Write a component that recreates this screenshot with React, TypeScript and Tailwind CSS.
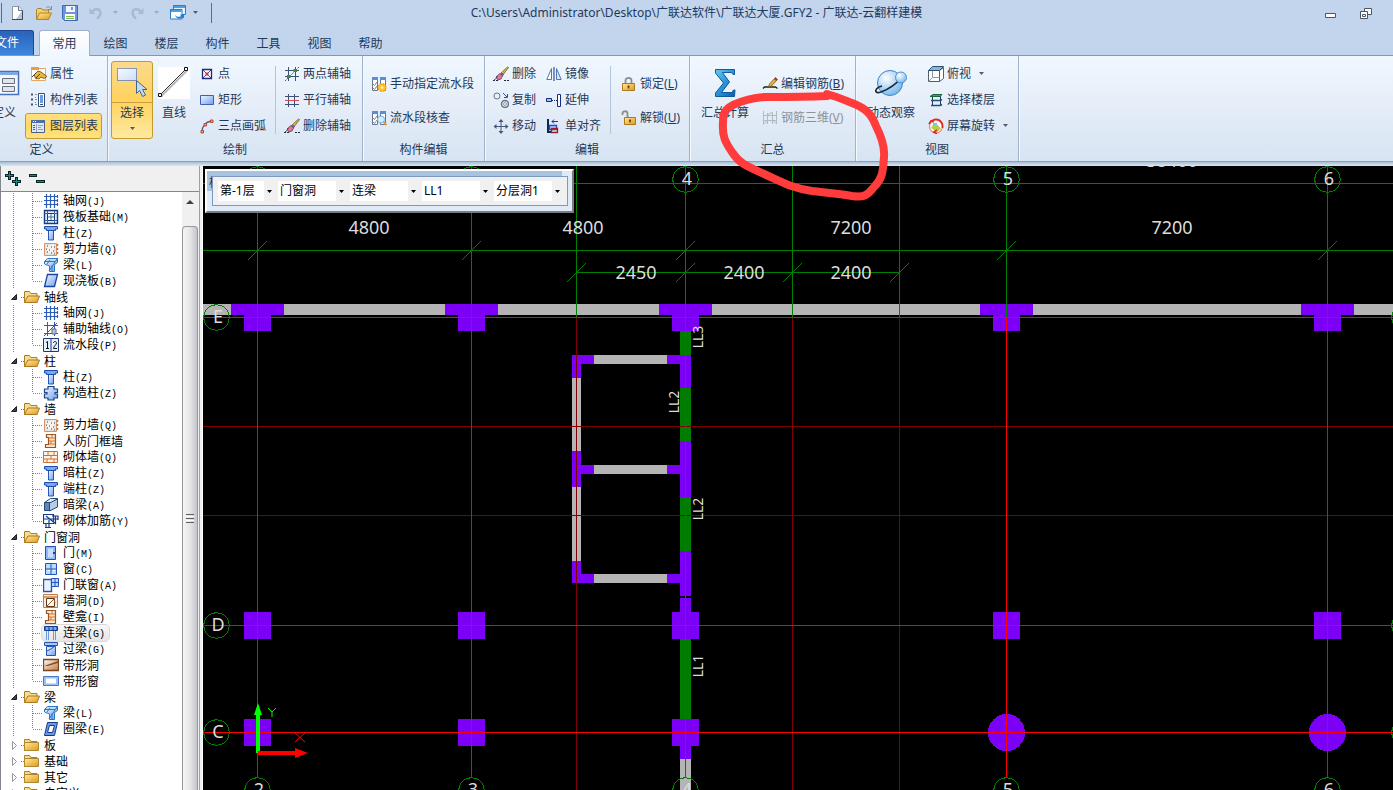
import { useState, type ReactNode } from 'react'
import { clsx } from 'clsx'

type IconProps = { size?: number; children: ReactNode; box?: number }

function Glyph({ size = 16, box = 16, children }: IconProps) {
  return (
    <svg width={size} height={size} viewBox={`0 0 ${box} ${box}`} fill="none" className="shrink-0" aria-hidden="true">
      {children}
    </svg>
  )
}

function Defs() {
  return (
    <svg width="0" height="0" className="absolute" aria-hidden="true">
      <defs>
        <linearGradient id="gBlue" x1="0" y1="0" x2="1" y2="1">
          <stop offset="0" stopColor="#f4f9ff" />
          <stop offset="1" stopColor="#6f9df0" />
        </linearGradient>
        <linearGradient id="gGold" x1="0" y1="0" x2="1" y2="1">
          <stop offset="0" stopColor="#ffeb9c" />
          <stop offset="1" stopColor="#e0981c" />
        </linearGradient>
        <linearGradient id="gSigma" x1="0" y1="0" x2="1" y2="1">
          <stop offset="0" stopColor="#6cc8f0" />
          <stop offset="0.5" stopColor="#2a93d8" />
          <stop offset="1" stopColor="#0c5ca8" />
        </linearGradient>
        <linearGradient id="gBrown" x1="0" y1="0" x2="1" y2="1">
          <stop offset="0" stopColor="#ffffff" />
          <stop offset="1" stopColor="#c07840" />
        </linearGradient>
        <radialGradient id="gGlobe" cx="0.35" cy="0.3" r="0.8">
          <stop offset="0" stopColor="#ffffff" />
          <stop offset="1" stopColor="#6ab2ec" />
        </radialGradient>
      </defs>
    </svg>
  )
}

const Caret = ({ light = false }: { light?: boolean }) => (
  <svg width="7" height="4" viewBox="0 0 7 4" className="shrink-0" aria-hidden="true">
    <path d="M1 0h5L3.500 3z" fill={light ? '#9fabbd' : '#4d5d73'} />
  </svg>
)

/* quick access icons */
const NewIcon = () => (
  <Glyph>
    <path d="M2.500 1.500h6.500l3.500 4v9h-10z" fill="#fff" stroke="#8b98aa" />
    <path d="M6 14l6-8v8z" fill="#b9c6d8" />
    <path d="M12.500 5v9.500H2" stroke="#3d4756" />
    <path d="M8.500 1.500v4h4" fill="#e8eef6" stroke="#66748a" />
  </Glyph>
)
const OpenIcon = () => (
  <Glyph>
    <path d="M.5 14V4.500l1-1h4l1.500 1.500h5.500V8" fill="#f2cf6c" stroke="#a8842c" />
    <path d="M.5 14.500L3.500 8H15.500l-3 6.500z" fill="url(#gGold)" stroke="#b5832a" />
    <path d="M10 3c1.500-2 3.500-1.500 4.500.5M15.500 1v3.500H12" stroke="#7a8da8" />
  </Glyph>
)
const SaveIcon = () => (
  <Glyph>
    <path d="M.5.5h15v15h-13l-2-2z" fill="#6f95dc" stroke="#3f67b8" />
    <path d="M4 1h9v6H4z" fill="#f2f6fc" />
    <path d="M9 2h2v3H9z" fill="#6f95dc" />
    <path d="M3 9h10v6H3z" fill="#fff" />
    <path d="M4 11.500h8M4 13.500h8" stroke="#7fbf4c" />
  </Glyph>
)
const UndoIcon = () => (
  <Glyph>
    <path d="M4 7c2-3.500 8-4 8.500.5.200 3-1.500 4.500-3.500 6" stroke="#a9b9d0" strokeWidth="2.400" />
    <path d="M1.500 3v6h6z" fill="#a9b9d0" />
  </Glyph>
)
const RedoIcon = () => (
  <Glyph>
    <path d="M12 7c-2-3.500-8-4-8.500.5-.2 3 1.500 4.500 3.500 6" stroke="#a9b9d0" strokeWidth="2.400" />
    <path d="M14.500 3v6h-6z" fill="#a9b9d0" />
  </Glyph>
)
const WindowsIcon = () => (
  <Glyph>
    <path d="M3.500.5h12v9h-12z" fill="#e6f3fd" stroke="#2b7ec4" />
    <path d="M4 1h11v2H4z" fill="#4aa3e0" />
    <path d="M.5 4.500h11.500v9.500H.5z" fill="#fff" stroke="#2b7ec4" />
    <path d="M1 5h10.500v2H1z" fill="#4aa3e0" />
    <path d="M5 9.500c1 2.500 4 3 6 1.500l-1-1.500h4v4l-1.300-1.300C9.500 15 5.500 13.500 5 9.500z" fill="#1f7fd0" />
  </Glyph>
)

/* ribbon icons */
const DefineIcon = () => (
  <Glyph size={32} box={32}>
    <path d="M3 4.500h27.500v23H3z" fill="#f4f8fd" stroke="#4472b8" strokeWidth="1.500" />
    <path d="M3.500 5h26.500v3H3.500z" fill="#7fa9e4" />
    <path d="M14.500 11.500h12v5h-12zM14.500 19.500h12v5h-12z" fill="#dfe6ee" stroke="#66707e" />
  </Glyph>
)
const PropIcon = () => (
  <Glyph>
    <path d="M.5 2.500h14v12H.5z" fill="#fff" stroke="#e8a860" />
    <path d="M0 1h8v3H0z" fill="#ef9a48" />
    <path d="M3 9l4-4 3 1 6 4.500-3 2-3-1.500-2 2-2-.5-1 .5z" fill="#edb838" stroke="#5a4420" strokeWidth=".8" />
    <path d="M1 11l4-4M5 12l4-4" stroke="#4a3820" />
  </Glyph>
)
const ListIcon = () => (
  <Glyph>
    <path d="M0 2.500h2M0 7.500h2M0 12.500h2" stroke="#44546c" strokeWidth="2" />
    <path d="M4 2.500h2M4 5.500h1M4 7.500h2M4 10.500h1M4 12.500h2" stroke="#8090a8" />
    <path d="M7.500 1.500h6v13h-6z" fill="#fff" stroke="#34506e" />
    <path d="M9 3h3v8H9z" fill="#6c9ae8" />
    <path d="M9 12.500h3" stroke="#34506e" />
  </Glyph>
)
const LayerIcon = () => (
  <Glyph>
    <path d="M.5 2.500h13v12H.5z" fill="#dfe8f4" stroke="#4a5f80" />
    <path d="M0 2h14v3H0z" fill="#4a6fb0" />
    <path d="M2 3.500h1M4 3.500h1" stroke="#fff" />
    <path d="M2 7.500h2M2 9.500h2M2 11.500h2" stroke="#4a5f80" />
    <path d="M7 7.500h5M7 9.500h3M7 11.500h5" stroke="#d09838" />
    <path d="M5.500 6v8" stroke="#90a4c0" />
  </Glyph>
)
const SelectIcon = () => (
  <Glyph size={32} box={32}>
    <path d="M1.500 2.500h19v12h-19z" fill="url(#gBlue)" />
    <path d="M1.500 2.500h19v12h-19z" fill="#f5f9ff" fillOpacity=".7" stroke="#2a4c90" strokeDasharray="1 1" />
    <path d="M20.500 14.500v13l3-3 3 6 3-1.500-3-5.500h4.500z" fill="#c3dbf6" stroke="#40648c" />
  </Glyph>
)
const LineIcon = () => (
  <Glyph size={32} box={32}>
    <path d="M0 0h32v32H0z" fill="#fff" />
    <path d="M3 29.500L29 3.500" stroke="#b8b8b8" strokeWidth="2" />
    <path d="M2 28L28 2" stroke="#303030" />
    <path d="M.5 26.500h3v3h-3zM26.500.5h3v3h-3z" fill="#fff" stroke="#101010" />
  </Glyph>
)
const PointIcon = () => (
  <Glyph>
    <path d="M3.500 3.500h9v9h-9z" fill="#fff" stroke="#1c2a78" strokeWidth="1.300" />
    <path d="M4 4l8 8M12 4l-8 8" stroke="#1c2a78" strokeWidth=".8" />
    <path d="M6.500 6.500h3v3h-3z" fill="#d03050" />
  </Glyph>
)
const RectIcon = () => (
  <Glyph>
    <path d="M1.500 3.500h13v9h-13z" fill="url(#gBlue)" stroke="#3c5fb4" />
  </Glyph>
)
const ArcIcon = () => (
  <Glyph>
    <path d="M3 14C3 8 7 3.500 13 3" stroke="#4060a0" strokeWidth="1.300" />
    <path d="M2 12.500h2.500V15H2zM5 5.500h2.500V8H5zM11.500 2H14v2.500h-2.500z" fill="#f0a080" stroke="#c04828" />
  </Glyph>
)
const TwoPtAxisIcon = () => (
  <Glyph>
    <path d="M4.500 1v14M11.500 1v14M1 4.500h14M1 10.500h14" stroke="#3a5278" />
    <path d="M1 15L15 1" stroke="#d82020" strokeDasharray="2 1" />
    <path d="M9.500 3h3.500v3H9.500zM3 9h3.500v3H3z" fill="#3b8c30" />
  </Glyph>
)
const ParAxisIcon = () => (
  <Glyph>
    <path d="M4.500 2v13M10.500 2v13M1 4.500h14M1 12.500h14" stroke="#3a5278" />
    <path d="M1 8.500h14" stroke="#e04848" />
  </Glyph>
)
const EraseIcon = () => (
  <Glyph>
    <path d="M0 14.500h6M11 14.500h5" stroke="#202830" strokeDasharray="2 1" />
    <path d="M15.500 1.500l-6 8-2-2L14.500 1z" fill="#e8b838" stroke="#604818" strokeWidth=".7" />
    <path d="M9 6.500l2 2-1.500 2-2.500-2z" fill="#5068a0" />
    <path d="M4 10l3-2.500 2.500 2.500L8 13l-3 1-1.500-2z" fill="#e07898" stroke="#803050" strokeWidth=".8" />
    <path d="M1 14c2-.5 2-2 3-4" stroke="#304060" />
  </Glyph>
)
const FlowBase = () => (
  <>
    <path d="M1.500 1.500h5v13h-5zM9.500 1.500h5v13h-5z" fill="#fff" stroke="#66768e" />
    <path d="M1 1h6v3H1zM9 1h6v3H9z" fill="#5f8cd8" />
    <path d="M2 8l1.500 1.500L6 6M2 12l1.500 1.500L6 10" stroke="#7a8898" />
  </>
)
const FlowSetIcon = () => (
  <Glyph>
    <FlowBase />
    <circle cx="11" cy="11.500" r="3.800" fill="#ffc830" stroke="#f0a010" strokeDasharray="2 1" strokeWidth="1.400" />
    <circle cx="11" cy="11.500" r="1.200" fill="#fff3c0" />
  </Glyph>
)
const FlowCheckIcon = () => (
  <Glyph>
    <FlowBase />
    <circle cx="10" cy="9.500" r="3.500" fill="#d5ecff" stroke="#80b0dc" />
    <path d="M12.500 12l3 3" stroke="#e0a030" strokeWidth="2" />
  </Glyph>
)
const CopyIcon = () => (
  <Glyph>
    <circle cx="4" cy="4" r="3" stroke="#6b7686" />
    <circle cx="12" cy="12" r="3.500" stroke="#6b7686" strokeWidth="1.500" />
    <circle cx="12" cy="12" r="1.500" stroke="#9aa4b2" />
    <path d="M10 1l4 4M14.500 2v3.500H11" stroke="#2850a0" />
  </Glyph>
)
const MoveIcon = () => (
  <Glyph>
    <path d="M8 3v11M2.500 8.500h11" stroke="#42597a" />
    <path d="M8 1l2.500 3h-5zM8 16l2.500-3h-5zM.5 8.500l3-2.500v5zM15.500 8.500l-3-2.500v5z" fill="#42597a" />
  </Glyph>
)
const MirrorIcon = () => (
  <Glyph>
    <path d="M5.500 2.500v11H.8z" fill="#fff" stroke="#5078b0" />
    <path d="M8 1v14" stroke="#142c80" />
    <path d="M10.500 2.500v11h4.700z" fill="#d6e4f8" stroke="#5078b0" />
  </Glyph>
)
const ExtendIcon = () => (
  <Glyph>
    <path d="M.5 6.500h5v3h-5z" fill="#a8c4ec" stroke="#142c80" />
    <path d="M6 8.500h5" stroke="#142c80" strokeDasharray="1 1" />
    <path d="M11.500 2.500h3v12h-3z" fill="#fff" stroke="#142c80" />
  </Glyph>
)
const AlignIcon = () => (
  <Glyph>
    <path d="M2 1v14" stroke="#0c2a48" strokeWidth="2" />
    <path d="M1 14h4" stroke="#0c2a48" strokeWidth="2" />
    <path d="M3.500 7.500h7v4h-7z" fill="#bcd4ff" stroke="#1c4cd8" strokeWidth="1.300" />
    <path d="M5.500 10.500h6v4h-6z" stroke="#a01820" strokeWidth="1.300" />
    <path d="M6 3.500h6M8 1.500l-2 2 2 2" stroke="#4028a0" />
  </Glyph>
)
const LockIcon = ({ open = false }: { open?: boolean }) => (
  <Glyph>
    <path d={open ? 'M1.500 5V3.500c0-3 5-3 5 0V7' : 'M4.500 7V4.500c0-3.500 6-3.500 6 0V7'} stroke="#8f8f86" strokeWidth="1.800" />
    <path d={open ? 'M3.500 7.500h11v7h-11z' : 'M1.500 7.500h12v7h-12z'} fill="url(#gGold)" stroke="#b07818" />
    <path d={open ? 'M9 9.500v3M8 10.500h2' : 'M7.500 9.500v3M6.500 10.500h2'} stroke="#5c3c08" strokeWidth="1.300" />
  </Glyph>
)
const SigmaIcon = () => (
  <Glyph size={32} box={32}>
    <path
      d="M6.500 2.500h19v5h-1.500L22.500 5.500h-9L20.500 15 12.500 25.500h10.500l1.500-2.500h1.500l-.5 6.500H6.500v-3.500L14.500 16 6.500 6z"
      fill="url(#gSigma)"
      stroke="#0d5a9c"
    />
  </Glyph>
)
const RebarEditIcon = () => (
  <Glyph>
    <path d="M1 12.500l1.500-1.500h11l2 1.500" stroke="#102818" strokeWidth="1.300" />
    <path d="M13.500 1.500l2 2-6 6.500-3 1 1-3z" fill="#eab63c" stroke="#705018" strokeWidth=".8" />
    <path d="M13.500 1.500l2 2-1.500 1.500-2-2z" fill="#a83a30" />
  </Glyph>
)
const Rebar3dIcon = () => (
  <Glyph>
    <path d="M1.500 1v13M5.500 3v11M10.500 3v11M14.500 1v13M1 5.500h14M1 10.500h14M1 14.500l5-4M10 10l5 4M5 5l6-3" stroke="#b3b9c0" />
  </Glyph>
)
const OrbitIcon = () => (
  <Glyph size={32} box={32}>
    <circle cx="15" cy="16" r="12.500" fill="url(#gGlobe)" stroke="#3c86cc" />
    <path d="M4 20c-5 3-4 7 2 5 8-3 16-9 20-14" stroke="#1c2838" strokeWidth="1.600" />
    <circle cx="26" cy="10.500" r="5.500" fill="url(#gGlobe)" stroke="#4c92d0" />
    <path d="M4 20l3-1" stroke="#1c2838" strokeWidth="1.600" />
  </Glyph>
)
const CubeIcon = () => (
  <Glyph>
    <path d="M.5 4.500h11v11H.5zM11.500 15.500l4-3v-11l-4 3" fill="#fff" stroke="#55606e" />
    <path d="M.5 4.500l4-4h11l-4 4z" fill="#7fb8e0" stroke="#34506e" />
    <path d="M4.500 5v6.500h7M4.500 11.500l-4 4" stroke="#8c98a6" />
  </Glyph>
)
const FloorIcon = () => (
  <Glyph>
    <path d="M4.500 5v9M12.500 4v9" stroke="#1c3c68" />
    <path d="M2 4.500l3-2h9l-2 2z" fill="#40a050" stroke="#186838" />
    <path d="M3 8.500h9l2-1M3 13.500h9l2-1" stroke="#205078" strokeWidth="1.500" />
  </Glyph>
)
const RotateIcon = () => (
  <Glyph>
    <circle cx="8" cy="8.500" r="6.500" fill="#fff" stroke="#e88080" strokeWidth="1.200" />
    <path d="M3 10c2-5 5-4 7-3l3 4-4 3z" fill="#b8d040" />
    <path d="M4 3C7 0 13 1 14.500 7v3M1 6l2-3 3 1M9 16l-3-2 3-2" stroke="#e02828" strokeWidth="1.800" />
    <path d="M5 5h4v2H5z" fill="#70c8f0" />
  </Glyph>
)

/* tree icons */
const treeIcons = {
  grid: (
    <path d="M3.500 1v14M7.500 1v14M11.500 1v14M1 3.500h14M1 7.500h14M1 11.500h14M14.500 2v3M14.500 6v3M14.500 10v3" stroke="#2c5cb8" strokeWidth="1.200" />
  ),
  raft: (
    <>
      <path d="M1.500 1.500h13v13h-13z" fill="#dfeafa" stroke="#143c80" strokeWidth="1.400" />
      <path d="M4.500 4.500h7v7h-7z" fill="#fff" stroke="#143c80" />
      <path d="M4.500 2v2M11.500 2v2M4.500 12v2M11.500 12v2M2 4.500h2M2 11.500h2M12 4.500h2M12 11.500h2M8 5v6M5 8h6" stroke="#3c68b0" />
    </>
  ),
  column: (
    <>
      <path d="M5.500 5.500h5v9.500h-5z" fill="url(#gBlue)" stroke="#2454b4" />
      <path d="M1.500 1.500h13V4h-2v1.500h-9V4h-2z" fill="#78a8f0" stroke="#1c4cb0" />
    </>
  ),
  shear: (
    <>
      <path d="M1.500 2.500h12v12h-12z" fill="#e6e4e0" stroke="#d49468" />
      <path d="M3 5l8-2v8l-6 2z" fill="#f6f4f2" />
      <path d="M4 5h1M8 6h1M6 9h1M10 10h1M4 11h1M8 12h1M11 6h1M3 8h1M11 13h1" stroke="#404040" />
      <path d="M14.500 3v2M14.500 7v2M14.500 11v2" stroke="#e06818" strokeWidth="1.500" />
    </>
  ),
  beam: (
    <>
      <path d="M1.500 4.500l3-3h10l-2 3z" fill="#bfe2fa" stroke="#2878c0" />
      <path d="M1.500 4.500h11l2-3v4l-3 2v7h-5V9l-5-2z" fill="url(#gBlue)" stroke="#2878c0" />
      <path d="M6 14l6-9M4 7l3-4M9 14V8" stroke="#2878c0" />
    </>
  ),
  slab: (
    <path d="M4.500 1.500h10l-3 12h-10z" fill="url(#gBlue)" stroke="#1844a0" strokeWidth="1.300" />
  ),
  aux: (
    <>
      <path d="M4.500 1v14M11.500 1v14M1 4.500h14M1 12.500h14M1 15L14 2" stroke="#2c5cb8" />
      <path d="M9 8h4v5H9z" fill="#b8c4d4" stroke="#606c7c" />
    </>
  ),
  flow: (
    <>
      <path d="M.5 1.500h15v13H.5z" fill="#e6f0fc" stroke="#1c3c78" />
      <path d="M8 2v12" stroke="#1c3c78" />
      <path d="M3 5.500l1.500-1v7M3 11.500h3M10.500 6c0-2 3-2 3 0 0 1.500-3 3.500-3 5.500h3.500" stroke="#101828" />
    </>
  ),
  structCol: (
    <path d="M5 1.500h6V4h3.500v3.500H12V9h2.500v4H11v2H5v-2H1.500V9H4V7.500H1.500V4H5z" fill="url(#gBlue)" stroke="#1c4484" strokeWidth="1.200" />
  ),
  doorFrame: (
    <>
      <path d="M3.500 1.500h9v13h-10v-3h3v-7h-2z" fill="#fbe3cc" stroke="#a45018" strokeWidth="1.200" />
      <path d="M6 5h6M6 8h6M6 11h6M9 2v3M8 8v3" stroke="#c87838" />
    </>
  ),
  brick: (
    <>
      <path d="M.5 2.500h14v11H.5z" fill="#fff4e6" stroke="#d07030" />
      <path d="M1 6.500h13M1 10h13M5 3v3M11 3v3M8 6v4M4 10v3M11 10v3" stroke="#d07030" />
    </>
  ),
  hiddenBeam: (
    <>
      <path d="M1.500 5.500l6-4h7l-5 4z" fill="#e0ecf8" stroke="#284878" />
      <path d="M1.500 5.500h5v8h-5z" fill="#5e86b8" stroke="#284878" />
      <path d="M6.500 6l8-4v8l-8 4z" fill="#b4cce8" stroke="#284878" />
    </>
  ),
  brickBar: (
    <path d="M.5 1.500h10v9H.5zM1 6h14M3 3l10 8M12.500 3v7M3 10v5M6 7v8M2 14.500h6M9 3h6v4" stroke="#143c88" strokeWidth="1.200" />
  ),
  door: (
    <>
      <path d="M2.500 1.500h10v13h-10z" fill="#8db9f8" stroke="#2050b0" />
      <path d="M5 3.500h5v9H5z" fill="#c8deff" />
      <path d="M10 8h2" stroke="#102040" strokeWidth="1.500" />
    </>
  ),
  window: (
    <>
      <path d="M2.500 2.500h11v11h-11z" fill="#b6dcff" stroke="#2454b4" />
      <path d="M8 3v10M3 8h10" stroke="#2454b4" />
      <path d="M5 9.500h2M10 9.500h2" stroke="#fff" />
    </>
  ),
  doorWin: (
    <>
      <path d="M.5 2.500h8v12h-8z" fill="#e8f2ff" stroke="#2454b4" strokeWidth="1.400" />
      <path d="M8.500 1.500h7v8h-7z" fill="#b6dcff" stroke="#2454b4" />
      <path d="M12 2v7M9 5.500h6" stroke="#2454b4" />
    </>
  ),
  hole: (
    <>
      <path d="M.5 1.500h14v13H.5z" fill="#fde8d4" stroke="#c87838" />
      <path d="M3.500 5.500h8v8h-8z" fill="#fff" stroke="#603818" />
      <path d="M4 13l7-7 1 4M1 4h13" stroke="#a45820" />
    </>
  ),
  link: (
    <>
      <path d="M3.500 6v9M12.500 6v9M5.500 6v9M10.500 6v9" stroke="#6c98e0" />
      <path d="M1.500 1.500h13v4h-13z" fill="#3c74d0" stroke="#143c90" />
      <path d="M4 2v3M8 2v3M12 2v3" stroke="#c4dcff" />
    </>
  ),
  lintel: (
    <>
      <path d="M3.500 5.500h9v9h-9z" fill="url(#gBlue)" stroke="#2454b4" />
      <path d="M1.500 1.500h13v3h-13z" fill="#a8c8f8" stroke="#2454b4" />
      <path d="M4 10l4-2 4-3" stroke="#2454b4" />
    </>
  ),
  stripHole: (
    <>
      <path d="M.5 2.500h15v11H.5z" fill="url(#gBrown)" stroke="#7c4418" strokeWidth="1.300" />
      <path d="M1 9l14-5v2L5 9z" fill="#8c5020" />
    </>
  ),
  stripWin: (
    <>
      <path d="M.5 3.500h15v9H.5z" fill="#9cc0f8" stroke="#4a78c8" />
      <path d="M3 5.500h10v5H3z" fill="#fff" />
    </>
  ),
  ring: (
    <>
      <path d="M4.500 1.500h10l-3 13h-10z" fill="#6c98e8" stroke="#143c88" />
      <path d="M6.500 4.500h5l-2 7h-5z" fill="#fff" stroke="#143c88" />
    </>
  ),
}

type TreeIcon = keyof typeof treeIcons
type Leaf = [name: string, key: string, icon: TreeIcon]

const firstLeaves: Leaf[] = [
  ['轴网', 'J', 'grid'],
  ['筏板基础', 'M', 'raft'],
  ['柱', 'Z', 'column'],
  ['剪力墙', 'Q', 'shear'],
  ['梁', 'L', 'beam'],
  ['现浇板', 'B', 'slab'],
]

const treeGroups: { name: string; leaves: Leaf[] }[] = [
  { name: '轴线', leaves: [['轴网', 'J', 'grid'], ['辅助轴线', 'O', 'aux'], ['流水段', 'P', 'flow']] },
  { name: '柱', leaves: [['柱', 'Z', 'column'], ['构造柱', 'Z', 'structCol']] },
  {
    name: '墙',
    leaves: [
      ['剪力墙', 'Q', 'shear'],
      ['人防门框墙', '', 'doorFrame'],
      ['砌体墙', 'Q', 'brick'],
      ['暗柱', 'Z', 'column'],
      ['端柱', 'Z', 'column'],
      ['暗梁', 'A', 'hiddenBeam'],
      ['砌体加筋', 'Y', 'brickBar'],
    ],
  },
  {
    name: '门窗洞',
    leaves: [
      ['门', 'M', 'door'],
      ['窗', 'C', 'window'],
      ['门联窗', 'A', 'doorWin'],
      ['墙洞', 'D', 'hole'],
      ['壁龛', 'I', 'doorFrame'],
      ['连梁', 'G', 'link'],
      ['过梁', 'G', 'lintel'],
      ['带形洞', '', 'stripHole'],
      ['带形窗', '', 'stripWin'],
    ],
  },
  { name: '梁', leaves: [['梁', 'L', 'beam'], ['圈梁', 'E', 'ring']] },
  { name: '板', leaves: [] },
  { name: '基础', leaves: [] },
  { name: '其它', leaves: [] },
  { name: '自定义', leaves: [] },
]

function LeafRow({ leaf, last, active, onPick }: { leaf: Leaf; last: boolean; active: boolean; onPick: () => void }) {
  const [name, key, icon] = leaf
  return (
    <li className="flex h-4 items-center">
      <svg width="41" height="16" className="shrink-0" shapeRendering="crispEdges" aria-hidden="true">
        <path d={last ? 'M12.500 0v16M31.500 0v8M32 8.500h10' : 'M12.500 0v16M31.500 0v16M32 8.500h10'} stroke="#808080" strokeDasharray="1 1" />
      </svg>
      <button
        onClick={onPick}
        className={clsx(
          'flex h-4 items-center gap-1 whitespace-nowrap rounded-sm pl-px pr-1',
          active && 'bg-gradient-to-b from-[#f8f8f8] to-[#e5e5e5] outline outline-[#d9d9d9]',
        )}
      >
        <Glyph>{treeIcons[icon]}</Glyph>
        <span className="mt-0.5">
          {name}
          {key && <span className="font-['Liberation_Mono',monospace] text-[10px]">({key})</span>}
        </span>
      </button>
    </li>
  )
}

function GroupRow({ name, open }: { name: string; open: boolean }) {
  return (
    <button className="flex h-4 items-center whitespace-nowrap">
      <svg width="23" height="16" className="shrink-0" aria-hidden="true">
        {open ? <path d="M15.500 5.500v5h-5z" fill="#404040" stroke="#202020" /> : <path d="M11.500 4.500l4 4-4 4z" fill="#fff" stroke="#989898" />}
        <path d="M20 8.500h3" stroke="#808080" strokeDasharray="1 1" />
      </svg>
      <Glyph>
        <path d="M.5 13.500v-11h5l1.500 2h6v9z" fill={open ? '#f6dc90' : 'url(#gGold)'} stroke="#a88030" />
        {open && <path d="M.5 13.500L4 7h11.500l-2.500 6.500z" fill="url(#gGold)" stroke="#a87820" />}
        {!open && <path d="M.5 5.500h14v8H.5z" fill="url(#gGold)" stroke="#b08830" />}
      </Glyph>
      <span className="ml-1 mt-0.5">{name}</span>
    </button>
  )
}

function Sidebar() {
  const [active, setActive] = useState('门窗洞/连梁')
  const leaves = (group: string, items: Leaf[]) =>
    items.map((leaf, i) => (
      <LeafRow
        key={leaf[0]}
        leaf={leaf}
        last={i === items.length - 1}
        active={active === `${group}/${leaf[0]}`}
        onPick={() => setActive(`${group}/${leaf[0]}`)}
      />
    ))

  return (
    <aside className="flex w-[200px] shrink-0 flex-col border-l border-r border-l-[#828790] border-r-[#a0a0a0] bg-[#f0f0f0]">
      <div className="flex h-[26px] shrink-0 items-center gap-2 border-b border-[#828790] pb-0.5 pl-1">
        <button aria-label="全部展开">
          <Glyph>
            <path d="M4.500 1v9M0 5.500h9M11.500 7v9M7 11.500h9" stroke="#06282a" strokeWidth="3" />
            <path d="M4.500 2v7M1 5.500h7M11.500 8v7M8 11.500h7" stroke="#1c8c80" />
          </Glyph>
        </button>
        <button aria-label="全部折叠">
          <Glyph>
            <path d="M0 5.500h8M7 11.500h9" stroke="#06282a" strokeWidth="3" />
            <path d="M1 5.500h6M8 11.500h7" stroke="#1c8c80" />
          </Glyph>
        </button>
      </div>
      <div className="flex min-h-0 flex-1 pr-px">
        <ul className="min-w-0 flex-1 overflow-hidden bg-white pt-px text-xs leading-4 text-black">
          {leaves('', firstLeaves)}
          {treeGroups.map((g) => (
            <li key={g.name}>
              <GroupRow name={g.name} open={g.leaves.length > 0} />
              {g.leaves.length > 0 && <ul>{leaves(g.name, g.leaves)}</ul>}
            </li>
          ))}
        </ul>
        <div className="flex w-4 shrink-0 flex-col bg-[#f0f0f0]">
          <button aria-label="向上滚动" className="flex h-[34px] shrink-0 justify-center pt-2">
            <svg width="8" height="4" aria-hidden="true">
              <path d="M4 0l4 4H0z" fill="#404040" />
            </svg>
          </button>
          <div className="flex flex-1 flex-col items-center justify-center gap-px rounded-t-sm border border-b-0 border-[#979797] bg-gradient-to-r from-[#f5f5f5] via-[#e6e6e8] to-[#c4c5cb] pt-5">
            <span className="h-px w-2 bg-[#606060]" />
            <span className="h-px w-2 bg-white" />
            <span className="h-px w-2 bg-[#606060]" />
            <span className="h-px w-2 bg-white" />
            <span className="h-px w-2 bg-[#606060]" />
          </div>
        </div>
      </div>
    </aside>
  )
}

function Small({ icon, children, active, disabled, caret }: { icon: ReactNode; children: ReactNode; active?: boolean; disabled?: boolean; caret?: boolean }) {
  return (
    <button
      disabled={disabled}
      className={clsx(
        'flex h-[26px] items-center gap-[3px] whitespace-nowrap rounded-[3px] border pl-[5px]',
        active ? 'w-[77px] border-[#c29b29] bg-gradient-to-b from-[#ffdf7f] via-[#ffd763] to-[#ffe383]' : 'border-transparent',
        disabled && 'text-[#8d9299]',
      )}
    >
      {icon}
      <span>{children}</span>
      {caret && <span className="ml-1"><Caret /></span>}
    </button>
  )
}

function Big({ icon, children, className }: { icon: ReactNode; children: ReactNode; className: string }) {
  return (
    <button className={clsx('flex shrink-0 flex-col items-center whitespace-nowrap pt-1.5', className)}>
      {icon}
      <span className="mt-1.5 leading-4">{children}</span>
    </button>
  )
}

function Group({ title, className, inset, children }: { title: string; className: string; inset?: string; children: ReactNode }) {
  return (
    <section className={clsx('flex shrink-0 flex-col border-r border-[#9fb3cc] pt-[5px] shadow-[1px_0_0_#f4f9ff]', className)}>
      <div className={clsx('flex h-[78px]', inset)}>{children}</div>
      <h2 className="text-center leading-[22px]">{title}</h2>
    </section>
  )
}

const Rule = () => <span className="my-[5px] ml-2 mr-0.5 w-px shrink-0 bg-[#b4c5da]" />

const two = '[&>button]:h-[34px] pt-1.5'

function Ribbon() {
  return (
    <div className="flex h-[106px] shrink-0 overflow-hidden border-b border-[#8ba0bc] bg-gradient-to-b from-[#f0f7ff] via-[#e4edf8] to-[#d7e4f2]">
      <Group title="定义" className="-ml-6 w-[132px]">
        <Big icon={<DefineIcon />} className="ml-2 w-10">定义</Big>
        <div className="ml-px">
          <Small icon={<PropIcon />}>属性</Small>
          <Small icon={<ListIcon />}>构件列表</Small>
          <Small icon={<LayerIcon />} active>图层列表</Small>
        </div>
      </Group>
      <Group title="绘制" className="w-[255px]" inset="pl-[3px]">
        <button className="flex w-[42px] shrink-0 flex-col items-center rounded-[3px] border border-[#c29b29] bg-gradient-to-b from-[#fcd98c] via-[#ffd35c] to-[#ffe9a0]">
          <span className="flex h-[41px] w-full shrink-0 justify-center border-b border-[#c8a040] pt-1">
            <SelectIcon />
          </span>
          <span className="pt-0.5 leading-4">选择</span>
          <span className="mt-1.5"><Caret /></span>
        </button>
        <Big icon={<LineIcon />} className="w-[42px]">直线</Big>
        <div className="-ml-0.5">
          <Small icon={<PointIcon />}>点</Small>
          <Small icon={<RectIcon />}>矩形</Small>
          <Small icon={<ArcIcon />}>三点画弧</Small>
        </div>
        <Rule />
        <div>
          <Small icon={<TwoPtAxisIcon />}>两点辅轴</Small>
          <Small icon={<ParAxisIcon />}>平行辅轴</Small>
          <Small icon={<EraseIcon />}>删除辅轴</Small>
        </div>
      </Group>
      <Group title="构件编辑" className="w-[122px]" inset="pl-0.5">
        <div className={two}>
          <Small icon={<FlowSetIcon />}>手动指定流水段</Small>
          <Small icon={<FlowCheckIcon />}>流水段核查</Small>
        </div>
      </Group>
      <Group title="编辑" className="w-[205px]" inset="pl-0.5">
        <div>
          <Small icon={<EraseIcon />}>删除</Small>
          <Small icon={<CopyIcon />}>复制</Small>
          <Small icon={<MoveIcon />}>移动</Small>
        </div>
        <div className="ml-[3px]">
          <Small icon={<MirrorIcon />}>镜像</Small>
          <Small icon={<ExtendIcon />}>延伸</Small>
          <Small icon={<AlignIcon />}>单对齐</Small>
        </div>
        <Rule />
        <div className={clsx('ml-0.5', two)}>
          <Small icon={<LockIcon />}>锁定(<u>L</u>)</Small>
          <Small icon={<LockIcon open />}>解锁(<u>U</u>)</Small>
        </div>
      </Group>
      <Group title="汇总" className="w-[166px]" inset="pl-1">
        <Big icon={<SigmaIcon />} className="w-[62px]">汇总计算</Big>
        <div className={two}>
          <Small icon={<RebarEditIcon />}>编辑钢筋(<u>B</u>)</Small>
          <Small icon={<Rebar3dIcon />} disabled>钢筋三维(<u>V</u>)</Small>
        </div>
      </Group>
      <Group title="视图" className="w-[163px]" inset="pl-1">
        <Big icon={<OrbitIcon />} className="w-[62px]">动态观察</Big>
        <div>
          <Small icon={<CubeIcon />} caret>俯视</Small>
          <Small icon={<FloorIcon />}>选择楼层</Small>
          <Small icon={<RotateIcon />} caret>屏幕旋转</Small>
        </div>
      </Group>
    </div>
  )
}

function TitleBar() {
  return (
    <header className="grid h-[30px] shrink-0 grid-cols-[1fr_auto_1fr] pt-[3px]">
      <div className="flex h-5 items-center pl-px">
        <span className="h-5 w-px bg-[#5c6b80]" />
        <button aria-label="新建" className="ml-2"><NewIcon /></button>
        <button aria-label="打开" className="ml-2.5"><OpenIcon /></button>
        <button aria-label="保存" className="ml-2.5"><SaveIcon /></button>
        <button aria-label="撤销" className="ml-2.5"><UndoIcon /></button>
        <button aria-label="撤销列表" className="ml-2"><Caret light /></button>
        <button aria-label="恢复" className="ml-2.5"><RedoIcon /></button>
        <button aria-label="恢复列表" className="ml-2"><Caret light /></button>
        <button aria-label="切换窗口" className="ml-2.5"><WindowsIcon /></button>
        <button aria-label="窗口列表" className="ml-1.5"><Caret /></button>
        <span className="ml-3 h-5 w-px bg-[#5c6b80]" />
      </div>
      <h1 className="leading-5">{'C:\\Users\\Administrator\\Desktop\\广联达软件\\广联达大厦.GFY2 - 广联达-云翻样建模'}</h1>
      <div className="flex h-5 items-center justify-end gap-5 pr-[18px]">
        <button aria-label="最小化">
          <Glyph>
            <path d="M2.500 8.500h10v4h-10z" fill="#fff" stroke="#4c5566" />
          </Glyph>
        </button>
        <button aria-label="还原">
          <Glyph>
            <path d="M5.500 3.500h7v6h-7z" fill="#fff" stroke="#4c5566" />
            <path d="M1.500 6.500h7v7h-7z" fill="#fff" stroke="#4c5566" />
            <path d="M3.500 9.500h3v2h-3z" stroke="#4c5566" />
          </Glyph>
        </button>
      </div>
    </header>
  )
}

const tabs = ['常用', '绘图', '楼层', '构件', '工具', '视图', '帮助']

function Tabs() {
  const [tab, setTab] = useState('常用')
  return (
    <nav className="flex h-[26px] shrink-0 border-b border-[#7e99bd]">
      <button className="-ml-5 mr-[5px] w-[54px] rounded-t-[3px] border border-b-0 border-[#1c4794] bg-gradient-to-b from-[#2a62b8] to-[#3d86e0] text-white">
        文件
      </button>
      {tabs.map((t) => (
        <button
          key={t}
          onClick={() => setTab(t)}
          className={clsx(
            'w-[51px] rounded-t-[3px] border border-b-0 pt-0.5',
            t === tab ? '-mb-px border-[#9db2cf] bg-gradient-to-b from-white to-[#f0f7ff] pb-px' : 'border-transparent',
          )}
        >
          {t}
        </button>
      ))}
    </nav>
  )
}

const combos = [
  { label: '楼层', value: '第-1层' },
  { label: '构件类别', value: '门窗洞' },
  { label: '构件类型', value: '连梁' },
  { label: '构件', value: 'LL1' },
  { label: '分层', value: '分层洞1' },
]

function ComponentPalette() {
  return (
    <div className="absolute left-[2px] top-[3px] border-2 border-b-[#7c7c7c] border-l-white border-r-[#7c7c7c] border-t-white bg-[#deeaf8] pb-[5px] pr-1">
      <div className="-mb-[15px] mr-1.5 h-5 overflow-hidden bg-[#a9c2e0] pl-0.5 leading-6 text-[#1c2c44]">构件工具栏</div>
      <div className="relative ml-[5px] flex gap-1 border border-[#7d99bd] bg-[#f0f0f0] px-[5px] py-1">
        {combos.map((c, i) => (
          <div key={c.label} className={clsx('relative flex items-center bg-white', i === 0 ? 'w-14' : 'w-[68px]')}>
            <select aria-label={c.label} className="h-5 w-full appearance-none bg-white pl-0.5 text-xs text-black">
              <option>{c.value}</option>
            </select>
            <span className="pointer-events-none absolute inset-y-0 right-0 flex w-2.5 items-center justify-center bg-[#f0f0f0]">
              <svg width="5" height="3" aria-hidden="true">
                <path d="M0 0h5L2.500 3z" fill="#000" />
              </svg>
            </span>
          </div>
        ))}
      </div>
    </div>
  )
}

const PURPLE = '#7b00f5'
const GRAY = '#b4b4b4'
const GREEN = '#007d00'

const mainX = [257, 471, 685, 1006, 1327]
const subX = [576, 792, 899]
const axisNames = ['2', '3', '4', '5', '6']
const axisRows = [
  { name: 'E', y: 317 },
  { name: 'D', y: 625 },
  { name: 'C', y: 732 },
]

// x, y, width, height, fill
const walls: [number, number, number, number, string][] = [
  [680, 331, 11, 24, GREEN],
  [680, 355, 11, 33, PURPLE],
  [680, 388, 11, 53, GREEN],
  [680, 441, 11, 56, PURPLE],
  [680, 497, 11, 54, GREEN],
  [680, 551, 11, 45, PURPLE],
  [680, 598, 11, 14, PURPLE],
  [680, 639, 11, 80, GREEN],
  [680, 746, 11, 13, PURPLE],
  [680, 759, 11, 60, GRAY],
  [572, 355, 9, 23, PURPLE],
  [572, 378, 9, 73, GRAY],
  [572, 451, 9, 36, PURPLE],
  [572, 487, 9, 74, GRAY],
  [572, 561, 9, 22, PURPLE],
  ...[355, 465, 574].flatMap((y): [number, number, number, number, string][] => [
    [581, y, 13, 9, PURPLE],
    [594, y, 73, 9, GRAY],
    [667, y, 13, 9, PURPLE],
  ]),
]

const dims = [
  { x: 369, y: 234, t: '4800' },
  { x: 583, y: 234, t: '4800' },
  { x: 851, y: 234, t: '7200' },
  { x: 1172, y: 234, t: '7200' },
  { x: 636, y: 279, t: '2450' },
  { x: 744, y: 279, t: '2400' },
  { x: 851, y: 279, t: '2400' },
  { x: 1172, y: 167, t: '38400' },
]

const beamTags = [
  { x: 703, y: 337, t: 'LL3' },
  { x: 679, y: 402, t: 'LL2' },
  { x: 703, y: 509, t: 'LL2' },
  { x: 703, y: 666, t: 'LL1' },
]

function Bubble({ x, y, name }: { x: number; y: number; name?: string }) {
  const pts = Array.from({ length: 12 }, (_, i) => {
    const a = (i * Math.PI) / 6
    return `${(x + 0.5 + 13 * Math.sin(a)).toFixed(1)},${(y + 0.5 - 13 * Math.cos(a)).toFixed(1)}`
  })
  return (
    <>
      <polygon points={pts.join(' ')} fill="none" stroke="#008000" shapeRendering="crispEdges" />
      {name && <text x={x + 2} y={y + 6} textAnchor="middle">{name}</text>}
    </>
  )
}

function Plan() {
  return (
    <svg className="block h-full w-full" role="img" aria-label="平面图">
      <g transform="translate(-203 -166)" className="font-['Noto_Sans',sans-serif] text-[18px]" fill="#dcdcdc">
        <g shapeRendering="crispEdges">
          <rect x="203" y="304" width="2000" height="11" fill={GRAY} />
          {mainX.map((x, i) => (
            <g key={x} fill={PURPLE}>
              <rect x={x - 26} y="304" width="53" height="11" />
              <rect x={x - 13} y="315" width="27" height="16" />
              <rect x={x - 13} y="612" width="27" height="27" />
              {i < 3 ? <rect x={x - 13} y="719" width="27" height="27" /> : <circle cx={x + 0.5} cy="732.500" r="18.500" />}
            </g>
          ))}
          {walls.map(([x, y, w, h, fill]) => (
            <rect key={`${x}-${y}`} x={x} y={y} width={w} height={h} fill={fill} />
          ))}
          {[183, 250].map((y) => <rect key={y} x="203" y={y} width="2000" height="1" fill="#008000" />)}
          <rect x="576" y="272" width="324" height="1" fill="#008000" />
          {[426, 515].map((y) => <rect key={y} x="203" y={y} width="2000" height="1" fill="#800000" />)}
          {subX.map((x) => (
            <g key={x}>
              <rect x={x} y="166" width="1" height="151" fill="#008000" />
              <rect x={x} y="317" width="1" height="1000" fill="#800000" />
            </g>
          ))}
          {axisRows.map((r) => <rect key={r.name} x="203" y={r.y} width="2000" height="1" fill="#f00" />)}
          {mainX.map((x) => (
            <g key={x}>
              <rect x={x} y="166" width="1" height="151" fill="#008000" />
              <rect x={x} y="317" width="1" height="460" fill="#f00" />
            </g>
          ))}
          <g stroke="#008000">
            {mainX.map((x) => <path key={x} d={`M${x - 9} 260l19-19`} />)}
            {subX.concat(685).map((x) => <path key={x} d={`M${x - 9} 282l19-19`} />)}
          </g>
        </g>

        {mainX.map((x, i) => (
          <g key={x}>
            <Bubble x={x} y={179} name={i > 1 ? axisNames[i] : undefined} />
            <Bubble x={x} y={790} name={axisNames[i]} />
          </g>
        ))}
        {axisRows.map((r) => (
          <g key={r.name}>
            <Bubble x={216} y={r.y} name={r.name} />
            <Bubble x={1404} y={r.y} />
          </g>
        ))}
        {dims.map((d) => <text key={`${d.x}-${d.y}`} x={d.x} y={d.y} textAnchor="middle">{d.t}</text>)}
        {beamTags.map((b) => (
          <text key={`${b.x}-${b.y}`} transform={`translate(${b.x} ${b.y}) rotate(-90)`} textAnchor="middle" className="text-[14px]">
            {b.t}
          </text>
        ))}

        <rect x="256" y="714" width="4" height="39" fill="#0f0" />
        <path d="M258 703l4 12h-8z" fill="#0f0" />
        <path d="M258 751h37v-3l13 5-13 5v-3h-37z" fill="#f00" />
        <path d="M268 708l4 4 4-4M272 712v5" fill="none" stroke="#0f0" />
        <path d="M295 733l10 9M305 733l-10 9" stroke="#f00" />
      </g>
    </svg>
  )
}

function RedMark() {
  return (
    <svg className="pointer-events-none absolute left-0 top-0" width="900" height="210" aria-hidden="true">
      <path
        d="M827 96C806 97 790 97 765 97C752 98 742 101 733 105C724 110 723 114 723 122C722 136 725 142 732 152C739 163 746 166 762 173C784 183 792 188 812 191C830 193 840 194 852 196C866 198 868 194 874 187C882 179 883 173 884 157C885 147 881 136 876 126C871 113 865 108 852 103C842 99 838 97 827 94"
        fill="none"
        stroke="#ff3b3b"
        strokeWidth="8"
        strokeLinecap="round"
        strokeLinejoin="round"
      />
    </svg>
  )
}

export default function App() {
  return (
    <div className="relative flex h-screen flex-col overflow-hidden bg-gradient-to-b from-[#c3d5ed] to-[#bbcee6] font-['Noto_Sans','Noto_Sans_CJK_SC',sans-serif] text-xs text-[#1e395b]">
      <Defs />
      <TitleBar />
      <Tabs />
      <Ribbon />
      <div className="h-1 shrink-0 bg-gradient-to-b from-[#a9bed8] to-[#dbe7f4]" />
      <div className="flex min-h-0 flex-1">
        <Sidebar />
        <div className="w-[3px] shrink-0 border-r border-white bg-[#f0f0f0]" />
        <main className="relative min-w-0 flex-1 overflow-hidden bg-black">
          <Plan />
          <ComponentPalette />
        </main>
      </div>
      <RedMark />
    </div>
  )
}
